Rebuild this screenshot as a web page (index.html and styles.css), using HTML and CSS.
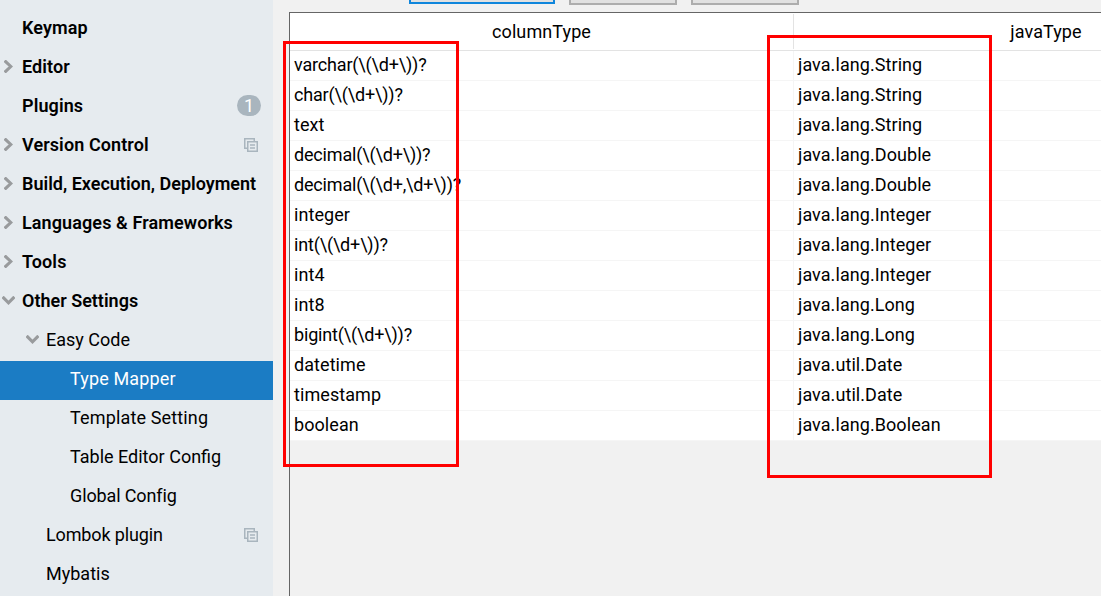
FILE: index.html
```
<!DOCTYPE html>
<html lang="en">
<head>
<meta charset="utf-8">
<title>Settings</title>
<link rel="stylesheet" href="styles.css">
</head>
<body>
<svg class="defs" width="0" height="0">
  <symbol id="right" viewBox="0 0 9 13"><path d="M.6 .6 L6.8 6.5 L.6 12.4" fill="none" stroke="#999b9d" stroke-width="3.1"/></symbol>
  <symbol id="down" viewBox="0 0 13 9"><path d="M.6 .8 L6.5 6.8 L12.4 .8" fill="none" stroke="#999b9d" stroke-width="3.1"/></symbol>
  <symbol id="copy" viewBox="0 0 14 14"><path d="M3 10.25H.75V.75H10.25V3M3.75 3.75H13.25V13.25H3.75ZM6 7H11M6 10H11" fill="none" stroke="#a9b5be" stroke-width="1.5"/></symbol>
</svg>
<div class="window">
  <nav class="tree">
    <div class="item top"><span class="label wide">Keymap</span></div>
    <div class="item top"><svg class="right"><use href="#right"/></svg><span class="label wide">Editor</span></div>
    <div class="item top"><span class="label wide">Plugins</span><span class="badge">1</span></div>
    <div class="item top"><svg class="right"><use href="#right"/></svg><span class="label wide">Version Control</span><svg class="copy"><use href="#copy"/></svg></div>
    <div class="item top"><svg class="right"><use href="#right"/></svg><span class="label">Build, Execution, Deployment</span></div>
    <div class="item top"><svg class="right"><use href="#right"/></svg><span class="label wide">Languages &amp; Frameworks</span></div>
    <div class="item top"><svg class="right"><use href="#right"/></svg><span class="label wide">Tools</span></div>
    <div class="item top"><svg class="down"><use href="#down"/></svg><span class="label">Other Settings</span></div>
    <div class="item second"><svg class="down"><use href="#down"/></svg><span class="label">Easy Code</span></div>
    <div class="item third selected"><span class="label wider">Type Mapper</span></div>
    <div class="item third"><span class="label wider">Template Setting</span></div>
    <div class="item third"><span class="label">Table Editor Config</span></div>
    <div class="item third"><span class="label tight">Global Config</span></div>
    <div class="item second"><span class="label tight">Lombok plugin</span><svg class="copy"><use href="#copy"/></svg></div>
    <div class="item second"><span class="label">Mybatis</span></div>
  </nav>
  <main class="content">
    <div class="buttons"><div class="button primary"></div><div class="button"></div><div class="button"></div></div>
    <div class="table">
      <div class="row head"><div class="cell">columnType</div><div class="cell">javaType</div></div>
      <div class="row"><div class="cell regex">varchar(\(\d+\))?</div><div class="cell">java.lang.String</div></div>
      <div class="row"><div class="cell regex">char(\(\d+\))?</div><div class="cell">java.lang.String</div></div>
      <div class="row"><div class="cell">text</div><div class="cell">java.lang.String</div></div>
      <div class="row"><div class="cell regex">decimal(\(\d+\))?</div><div class="cell">java.lang.Double</div></div>
      <div class="row"><div class="cell regex">decimal(\(\d+,\d+\))?</div><div class="cell">java.lang.Double</div></div>
      <div class="row"><div class="cell">integer</div><div class="cell">java.lang.Integer</div></div>
      <div class="row"><div class="cell regex">int(\(\d+\))?</div><div class="cell">java.lang.Integer</div></div>
      <div class="row"><div class="cell">int4</div><div class="cell">java.lang.Integer</div></div>
      <div class="row"><div class="cell">int8</div><div class="cell">java.lang.Long</div></div>
      <div class="row"><div class="cell regex">bigint(\(\d+\))?</div><div class="cell">java.lang.Long</div></div>
      <div class="row"><div class="cell">datetime</div><div class="cell">java.util.Date</div></div>
      <div class="row"><div class="cell">timestamp</div><div class="cell">java.util.Date</div></div>
      <div class="row"><div class="cell">boolean</div><div class="cell">java.lang.Boolean</div></div>
    </div>
  </main>
  <div class="mark mark-column"></div>
  <div class="mark mark-java"></div>
</div>
</body>
</html>
```
FILE: styles.css
```
* { box-sizing: border-box; }
body { margin: 0; font: 18px/21px Roboto, sans-serif; color: #000; }
.defs { position: absolute; }
.window { position: relative; display: flex; width: 1101px; height: 596px; overflow: hidden; background: #f1f1f1; }
.tree { flex: none; width: 273px; padding-top: 10px; background: #e6ebef; }
.item { display: flex; align-items: center; height: 39px; padding: 0 15px 3px 22px; white-space: nowrap; }
.item svg { flex: none; }
.label { padding-bottom: 2px; }
.wide { letter-spacing: .1px; }
.wider { letter-spacing: .15px; }
.tight { letter-spacing: -.13px; }
.top { font-weight: 600; }
.second { padding-left: 46px; }
.third { padding-left: 70px; }
.selected { background: #1b7cc4; color: #fff; }
.right { width: 9px; height: 13px; margin: -1px 9px 0 -18px; }
.down { width: 13px; height: 9px; margin: -1px 7px 0 -20px; }
.copy { width: 14px; height: 14px; margin-left: auto; }
.badge { width: 24px; height: 21px; margin: -1px -3px 0 auto; border-radius: 11px; background: #a9b5be; color: #fff; font-weight: 400; line-height: 21px; text-align: center; }
.content { flex: 1; min-width: 0; padding-left: 16px; }
.buttons { display: flex; gap: 14px; height: 12px; padding-left: 120px; }
.button { width: 108px; height: 5px; border: 2px solid #adadad; border-top: 0; background: #e1e1e1; }
.primary { width: 146px; height: 4px; border-color: #0f86dc; }
.table { width: 1010px; height: 586px; border: 1px solid #656565; }
.row { display: grid; grid-template-columns: 504px 504px; height: 30px; background: #fff; border-bottom: 1px solid #f5f5f5; }
.cell { padding: 3px 4px 0; white-space: nowrap; letter-spacing: .07px; }
.regex { letter-spacing: -.17px; }
.cell:first-child { border-right: 1px solid #f5f5f5; }
.head { height: 38px; border-bottom-color: #e3e3e3; }
.head .cell { padding-top: 8px; text-align: center; letter-spacing: .1px; }
.head .cell:first-child { height: 35px; margin-top: 1px; padding-top: 7px; border-color: #e3e3e3; }
.mark { position: absolute; border: 3px solid #f00; }
.mark-column { left: 283px; top: 41px; width: 176px; height: 426px; }
.mark-java { left: 767px; top: 35px; width: 225px; height: 443px; }
```
